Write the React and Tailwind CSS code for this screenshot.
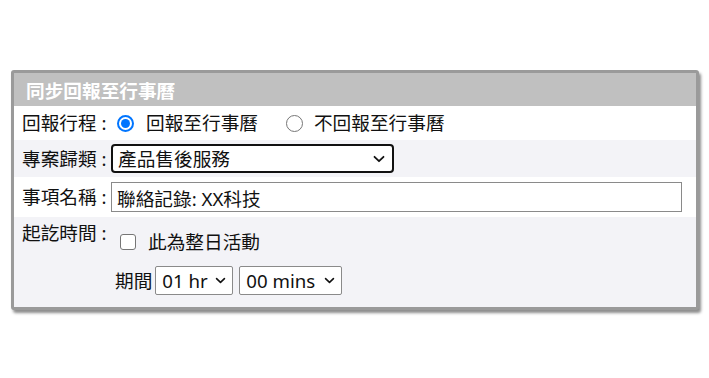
import { useState } from 'react';

const Chevron = ({ className }) => (
  <svg viewBox="0 0 12 8" className={className} fill="none" stroke="#111" strokeWidth="1.8" strokeLinecap="round" strokeLinejoin="round">
    <path d="M1.5 1.8 6 6.2l4.5-4.4" />
  </svg>
);

const Radio = ({ checked }) =>
  checked ? (
    <span className="flex h-[17px] w-[17px] items-center justify-center rounded-full border-[2px] border-[#0075ff] bg-white">
      <span className="h-[9px] w-[9px] rounded-full bg-[#0075ff]" />
    </span>
  ) : (
    <span className="h-[17px] w-[17px] rounded-full border-[1.5px] border-[#767676] bg-white" />
  );

export default function App() {
  const [mode, setMode] = useState('sync');

  return (
    <div className="min-h-[378px] bg-white pt-[70px] text-[18.67px] leading-[24px] text-[#111] font-['Noto_Sans','Noto_Sans_CJK_TC',sans-serif]">
      <div className="ml-[11px] w-[688px] rounded-[3px] border-[3px] border-[#9a9a9a] bg-white shadow-[2px_3px_3px_rgba(0,0,0,0.45)]">
        <div className="flex h-[33px] items-center bg-[#c0c0c0] pl-[12px] pt-[2px] text-[18.67px] font-bold text-white">
          同步回報至行事曆
        </div>

        <div className="flex h-[34px] items-center">
          <div className="w-[97px] pl-[8px]">回報行程 :</div>
          <label className="ml-[6px] flex cursor-pointer items-center gap-[12px]" onClick={() => setMode('sync')}>
            <Radio checked={mode === 'sync'} />
            <span>回報至行事曆</span>
          </label>
          <label className="ml-[28px] flex cursor-pointer items-center gap-[11px]" onClick={() => setMode('none')}>
            <Radio checked={mode === 'none'} />
            <span>不回報至行事曆</span>
          </label>
        </div>

        <div className="flex h-[37px] items-center bg-[#f3f3f7]">
          <div className="w-[97px] pl-[8px]">專案歸類 :</div>
          <div className="flex h-[29px] w-[283px] items-center justify-between rounded-[4px] border-[2px] border-[#111] bg-white pl-[5px] pr-[7px]">
            <span>產品售後服務</span>
            <Chevron className="h-[8px] w-[12px]" />
          </div>
        </div>

        <div className="flex h-[40px] items-center">
          <div className="w-[97px] pl-[8px]">事項名稱 :</div>
          <input
            defaultValue="聯絡記錄: XX科技"
            className="h-[30px] w-[571px] border border-[#8a8a8a] bg-white px-[5px] outline-none"
          />
        </div>

        <div className="flex h-[90px] bg-[#f3f3f7]">
          <div className="w-[97px] pl-[8px] pt-[4px]">起訖時間 :</div>
          <div className="flex flex-col">
            <label className="ml-[9px] mt-[13px] flex items-center gap-[12px]">
              <span className="h-[16px] w-[16px] rounded-[3px] border-[1.5px] border-[#767676] bg-white" />
              <span>此為整日活動</span>
            </label>
            <div className="mt-[12px] flex items-center gap-[5px] pl-[4px]">
              <span className="mr-[-2px]">期間</span>
              <div className="flex h-[29px] w-[78px] items-center justify-between rounded-[2px] border border-[#8a8a8a] bg-white pl-[6px] pr-[6px]">
                <span>01 hr</span>
                <Chevron className="h-[7px] w-[11px]" />
              </div>
              <div className="ml-[1px] flex h-[29px] w-[103px] items-center justify-between rounded-[2px] border border-[#8a8a8a] bg-white pl-[6px] pr-[6px]">
                <span>00 mins</span>
                <Chevron className="h-[7px] w-[11px]" />
              </div>
            </div>
          </div>
        </div>
      </div>
    </div>
  );
}
